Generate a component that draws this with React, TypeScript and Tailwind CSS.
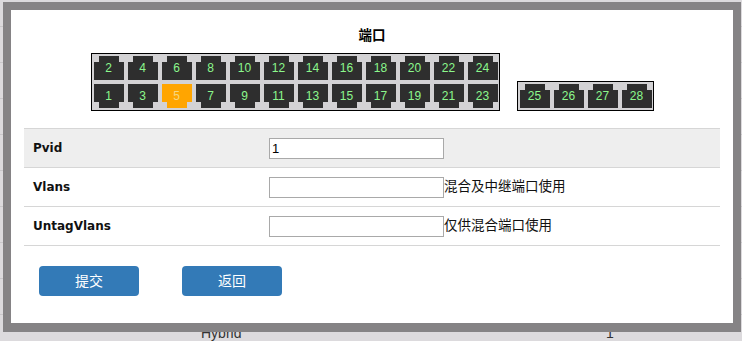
import React from "react";

const cjk = { fontFamily: '"Liberation Sans", "Noto Sans CJK SC", sans-serif' };

function Port({ n, top, active }: { n: number; top: boolean; active?: boolean }) {
  const c = active ? "bg-[#ffa500]" : "bg-[#2e2e2e]";
  return (
    <div className="relative w-[30px] h-[24px] flex flex-col items-center shrink-0">
      {top && <div className={`w-[20px] h-[6px] ${c}`} />}
      <div className={`w-[30px] h-[18px] ${c}`} />
      {!top && <div className={`w-[20px] h-[6px] ${c}`} />}
      <span
        className={`absolute inset-0 flex items-center justify-center text-[12px] leading-none ${
          active ? "text-[#f6d882]" : "text-[#8cf88c]"
        }`}
        style={{ fontFamily: '"Liberation Sans", sans-serif' }}
      >
        {n}
      </span>
    </div>
  );
}

export default function App() {
  const upper = [2, 4, 6, 8, 10, 12, 14, 16, 18, 20, 22, 24];
  const lower = [1, 3, 5, 7, 9, 11, 13, 15, 17, 19, 21, 23];
  const extra = [25, 26, 27, 28];
  const bgRows = Array.from({ length: 8 });

  return (
    <div className="relative w-[742px] h-[341px] overflow-hidden bg-[#dcdadd]">
      {/* page behind the dialog */}
      <div className="flex flex-col">
        <div className="h-[27px] border-b border-[#c9c7ca]" />
        {bgRows.map((_, i) => (
          <div key={i} className="h-[36px] border-b border-[#c9c7ca]" />
        ))}
        <div
          className="h-[36px] flex items-center text-[14px] text-[#333]"
          style={{ fontFamily: '"Liberation Sans", sans-serif' }}
        >
          <span className="ml-[201px] w-[405px]">Hybrid</span>
          <span>1</span>
        </div>
      </div>

      {/* dialog */}
      <div className="absolute left-[3px] top-[2px] w-[738px] h-[330px] border-8 border-b-[9px] border-[#858385] bg-white flex flex-col">
        <div
          className="mt-[17px] h-[18px] leading-[18px] text-center text-[13.5px] font-bold text-black"
          style={cjk}
        >
          端口
        </div>

        <div className="mt-[8px] flex justify-center items-end gap-[17px]">
          <div className="w-[409px] h-[58px] border border-black bg-[#d3d2d4] pl-[2px] pt-[2px] flex flex-col gap-[4px]">
            <div className="flex gap-[4px]">
              {upper.map((n) => (
                <Port key={n} n={n} top />
              ))}
            </div>
            <div className="flex gap-[4px]">
              {lower.map((n) => (
                <Port key={n} n={n} top={false} active={n === 5} />
              ))}
            </div>
          </div>
          <div className="w-[137px] h-[30px] border border-black bg-[#d3d2d4] pl-[2px] pt-[2px] flex gap-[4px]">
            {extra.map((n) => (
              <Port key={n} n={n} top />
            ))}
          </div>
        </div>

        <div className="mx-[13px] mt-[17px] border-t border-[#d6d6d6]">
          {[
            { label: "Pvid", value: "1", hint: "", bg: "bg-[#eeeeee]" },
            { label: "Vlans", value: "", hint: "混合及中继端口使用", bg: "bg-white" },
            { label: "UntagVlans", value: "", hint: "仅供混合端口使用", bg: "bg-white" },
          ].map((r) => (
            <div key={r.label} className={`h-[39px] border-b border-[#d6d6d6] flex items-center ${r.bg}`}>
              <div
                className="w-[245px] pl-[9px] text-[12px] font-bold text-[#111]"
                style={{ fontFamily: '"DejaVu Sans", sans-serif' }}
              >
                {r.label}
              </div>
              <input
                readOnly
                value={r.value}
                className="w-[175px] h-[21px] border border-[#a9a9a9] bg-white px-[2px] text-[13px] text-black outline-none"
                style={{ fontFamily: '"Liberation Sans", sans-serif' }}
              />
              {r.hint && (
                <span className="text-[13.5px] text-[#111] leading-none" style={cjk}>
                  {r.hint}
                </span>
              )}
            </div>
          ))}
        </div>

        <div className="mt-[20px] ml-[28px] flex gap-[43px]">
          <button
            className="w-[100px] h-[30px] rounded-[4px] bg-[#337ab7] text-white text-[14px]"
            style={cjk}
          >
            提交
          </button>
          <button
            className="w-[100px] h-[30px] rounded-[4px] bg-[#337ab7] text-white text-[14px]"
            style={cjk}
          >
            返回
          </button>
        </div>
      </div>
    </div>
  );
}
